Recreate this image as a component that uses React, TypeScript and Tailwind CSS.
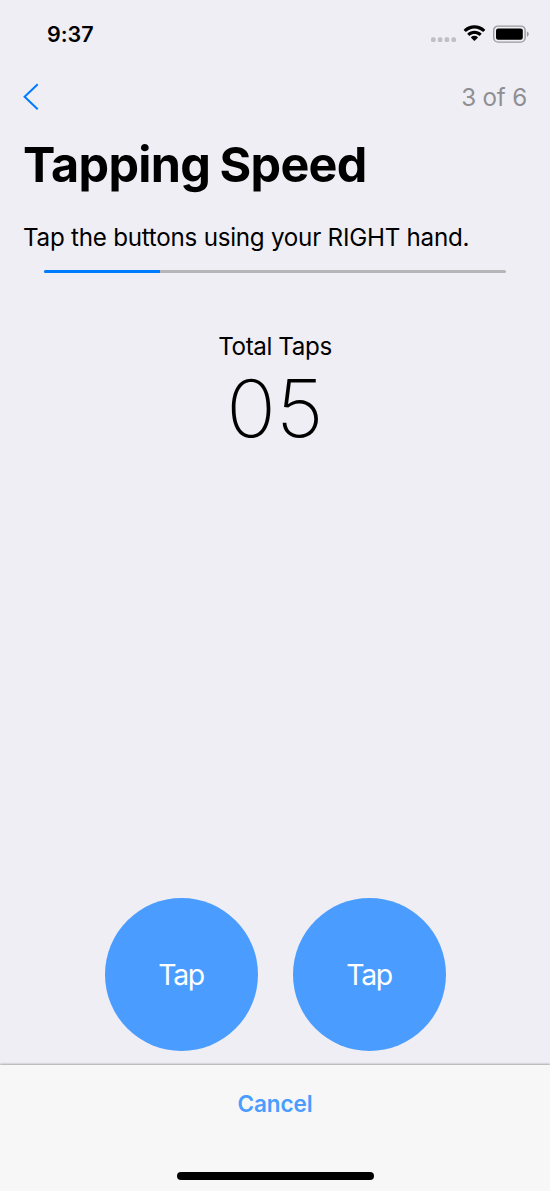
import React from "react";

function StatusIcons() {
  return (
    <svg width="100" height="24" viewBox="0 0 100 24" fill="none">
      <g fill="#c0c0c4">
        <rect x="1" y="15.300" width="4.600" height="4.800" rx="1.600" />
        <rect x="7.800" y="15.300" width="4.600" height="4.800" rx="1.600" />
        <rect x="14.600" y="15.300" width="4.600" height="4.800" rx="1.600" />
        <rect x="21.400" y="15.300" width="4.600" height="4.800" rx="1.600" />
      </g>
      <g fill="#000" transform="translate(-1.600 3.100) scale(1.035)">
        <path d="M44.5 3.3c3.1 0 5.9 1.200 8 3.200.2.2.5.2.6 0l1.600-1.600c.2-.2.2-.5 0-.7-5.700-5.300-14.700-5.300-20.400 0-.2.2-.2.500 0 .7l1.600 1.600c.2.2.4.2.6 0 2.200-2 5-3.200 8-3.200z" />
        <path d="M44.500 8.500c1.700 0 3.300.6 4.600 1.800.2.200.4.200.6 0l1.600-1.600c.2-.2.200-.5 0-.7-3.800-3.500-9.800-3.500-13.600 0-.2.200-.2.500 0 .7l1.600 1.600c.2.200.4.200.6 0 1.300-1.200 2.900-1.800 4.600-1.800z" />
        <path d="M47.700 12.200c.2-.2.200-.5 0-.7-1.900-1.600-4.600-1.600-6.400 0-.2.200-.2.500 0 .7l2.800 2.800c.2.200.5.200.7 0z" />
      </g>
      <g transform="translate(0 2.300)">
        <rect x="63.700" y="1.800" width="31.400" height="16" rx="4.300" stroke="#9a9a9d" strokeWidth="1.400" />
        <rect x="66" y="4.100" width="26.800" height="11.400" rx="2.200" fill="#000" />
        <path d="M96.900 7.100v5.400c1.200-.5 1.900-1.500 1.900-2.700s-.7-2.200-1.900-2.700z" fill="#9a9a9d" />
      </g>
    </svg>
  );
}

function StatusBar() {
  return (
    <div className="flex h-[68px] items-center justify-between pl-[47px] pr-[20px]">
      <span className="text-[21.500px] leading-[22px] font-semibold tracking-[-0.050px]">9:37</span>
      <StatusIcons />
    </div>
  );
}

function TapButton() {
  return (
    <button className="flex size-[153px] items-center justify-center rounded-full bg-[#4a9dff] pt-[2px] text-[28.400px] leading-none tracking-[-1.400px] text-white">
      Tap
    </button>
  );
}

export default function App() {
  return (
    <div className="flex h-[1191px] w-[550px] flex-col overflow-hidden bg-[#efeef4] font-['Inter',sans-serif] text-black">
      <StatusBar />
      <nav className="flex h-[59px] items-center justify-between pl-[22px] pr-[23px]">
        <button aria-label="Back" className="pb-[2px]">
          <svg width="18" height="30" viewBox="0 0 18 30" fill="none">
            <path d="M15.700 2.300 2.600 14.800l13.100 12.500" stroke="#007aff" strokeWidth="2" />
          </svg>
        </button>
        <span className="pt-[2px] text-[24.200px] leading-none tracking-[-0.200px] text-[#8f8f92]">3 of 6</span>
      </nav>
      <h1 className="pl-[23px] text-[48.500px] leading-[76px] font-bold tracking-[-0.700px] [word-spacing:-1.500px] whitespace-nowrap">
        Tapping Speed
      </h1>
      <p className="mt-[20px] pl-[23px] text-[24.200px] leading-[30px] tracking-[-0.250px] whitespace-nowrap">
        Tap the buttons using your RIGHT hand.
      </p>
      <div className="mx-[44px] mt-[17px] h-[3px] shrink-0 overflow-hidden rounded-full bg-[#b6b6b8]">
        <div className="h-full w-[116px] bg-[#007aff]" />
      </div>
      <section className="mt-[59px] flex flex-col items-center">
        <h2 className="text-[24.200px] leading-[30px] tracking-[-0.400px]">Total Taps</h2>
        <div className="mt-[6px] scale-x-[1.035] text-[79.500px] leading-[80px] font-extralight">05</div>
      </section>
      <div className="mt-auto mb-[14px] flex justify-center gap-[35px]">
        <TapButton />
        <TapButton />
      </div>
      <footer className="flex h-[126px] shrink-0 flex-col items-center bg-[#f7f7f7] pt-[24px] shadow-[0_-1px_2px_rgba(0,0,0,0.3)]">
        <button className="text-[22.500px] leading-[30px] font-semibold tracking-[-0.100px] text-[#4a9dff]">Cancel</button>
        <div className="mt-auto mb-[11px] h-[8px] w-[197px] rounded-full bg-black" />
      </footer>
    </div>
  );
}
